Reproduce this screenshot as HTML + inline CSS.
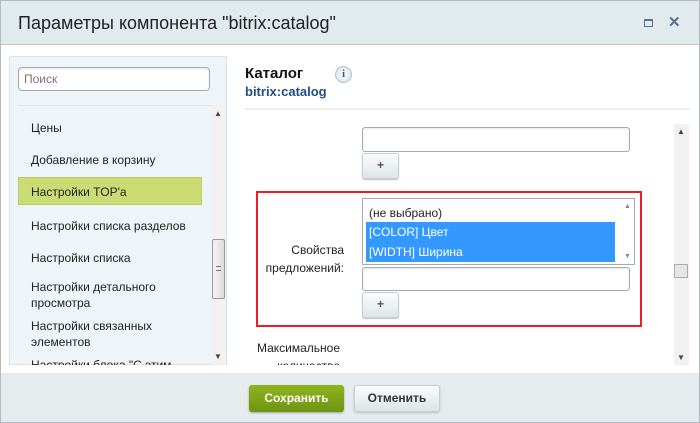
<!DOCTYPE html>
<html><head><meta charset="utf-8"><style>
*{box-sizing:border-box;margin:0;padding:0}
body{width:700px;height:423px;overflow:hidden;background:#fff;font-family:"Liberation Sans",Arial,sans-serif;position:relative;font-size:12px;color:#222}
.a{position:absolute}
.inp{position:absolute;background:#fff;border:1px solid #a5acb0;border-radius:3px;box-shadow:inset 0 1px 2px rgba(0,0,0,.1)}
.plus{position:absolute;width:37px;height:26px;border-radius:3px;background:linear-gradient(#fbfcfc,#dfe6e8);border:1px solid #c7cfd2;box-shadow:0 1px 1px rgba(0,0,0,.25);text-align:center;line-height:22px;font-size:12px;font-weight:bold;color:#555}
.li{position:absolute;left:31px;font-size:12px;color:#222;line-height:16px}
</style></head><body>
<div class="a" style="left:0;top:0;width:700px;height:423px;border:1px solid #b5bcbf"></div>
<div class="a" style="left:1px;top:1px;width:698px;height:44px;background:#e1eaed;border-bottom:1px solid #bcc5c9"></div>
<div class="a" style="left:18px;top:13px;font-size:18px;color:#222">Параметры компонента "bitrix:catalog"</div>
<div class="a" style="left:644px;top:19px;width:9px;height:8px;border:1px solid #59718d;border-top-width:2px"></div>
<div class="a" style="left:668px;top:13px;font-size:15px;color:#59718d;font-weight:bold">✕</div>

<div class="a" style="left:9px;top:56px;width:218px;height:309px;background:#eef4f7;border:1px solid #dbe3e6"></div>
<div class="inp" style="left:18px;top:67px;width:192px;height:24px;border-radius:4px"></div>
<div class="a" style="left:24px;top:72px;font-size:12px;color:#777">Поиск</div>
<div class="a" style="left:18px;top:105px;width:200px;height:1px;background:#dde5e8"></div>
<div class="a" style="left:212px;top:105px;width:13px;height:260px;background:#f1f1f1"></div>
<div class="a" style="left:214px;top:109px;font-size:8px;color:#444">▲</div>
<div class="a" style="left:214px;top:352px;font-size:8px;color:#444">▼</div>
<div class="a" style="left:212px;top:239px;width:13px;height:60px;background:linear-gradient(90deg,#f3f3f3,#dcdcdc);border:1px solid #999;border-radius:2px"></div>
<div class="a" style="left:216px;top:266px;width:5px;height:5px;border-top:1px solid #777;border-bottom:1px solid #777"></div>
<div class="li" style="top:120px">Цены</div>
<div class="li" style="top:152px">Добавление в корзину</div>
<div class="a" style="left:18px;top:177px;width:184px;height:28px;background:#cbdc74;border:1px solid #bccd68"></div>
<div class="li" style="top:184px">Настройки TOP'а</div>
<div class="li" style="top:218px">Настройки списка разделов</div>
<div class="li" style="top:250px">Настройки списка</div>
<div class="li" style="top:279px">Настройки детального<br>просмотра</div>
<div class="li" style="top:318px">Настройки связанных<br>элементов</div>
<div class="li" style="top:357px;height:8px;overflow:hidden">Настройки блока "С этим</div>

<div class="a" style="left:245px;top:65px;font-size:15px;font-weight:bold;color:#111">Каталог</div>
<div class="a" style="left:335px;top:66px;width:17px;height:17px;border-radius:50%;background:radial-gradient(#fff,#d5dde2);border:1px solid #b8c3c9;text-align:center;font:bold 11px 'Liberation Serif',serif;line-height:15px;color:#2b5f94">i</div>
<div class="a" style="left:245px;top:84px;font-size:13px;font-weight:bold;color:#1f4f82">bitrix:catalog</div>
<div class="a" style="left:245px;top:108px;width:445px;height:2px;background:#eceeef"></div>

<div class="a" style="left:674px;top:124px;width:15px;height:241px;background:#f1f1f1"></div>
<div class="a" style="left:677px;top:127px;font-size:8px;color:#444">▲</div>
<div class="a" style="left:677px;top:353px;font-size:8px;color:#444">▼</div>
<div class="a" style="left:674px;top:264px;width:14px;height:14px;background:#e6e6e6;border:1px solid #aaa"></div>

<div class="inp" style="left:362px;top:127px;width:268px;height:25px"></div>
<div class="plus" style="left:362px;top:153px">+</div>
<div class="a" style="left:256px;top:191px;width:386px;height:136px;border:2px solid #ee1c24"></div>
<div class="a" style="left:362px;top:198px;width:273px;height:67px;border:1px solid #a5acb0;background:#fff"></div>
<div class="a" style="left:369px;top:206px;font-size:12px">(не выбрано)</div>
<div class="a" style="left:366px;top:222px;width:249px;height:40px;background:#3399ff"></div>
<div class="a" style="left:369px;top:225px;font-size:12px;color:#fff">[COLOR] Цвет</div>
<div class="a" style="left:369px;top:245px;font-size:12px;color:#fff">[WIDTH] Ширина</div>
<div class="a" style="left:624px;top:203px;font-size:7px;color:#888">▲</div>
<div class="a" style="left:624px;top:253px;font-size:7px;color:#888">▼</div>
<div class="a" style="left:250px;top:241px;width:94px;text-align:right;font-size:12px;line-height:18px">Свойства<br>предложений:</div>
<div class="inp" style="left:362px;top:267px;width:268px;height:24px"></div>
<div class="plus" style="left:362px;top:292px">+</div>
<div class="a" style="left:250px;top:339px;width:90px;text-align:right;font-size:12px;line-height:18px;height:26px;overflow:hidden">Максимальное<br>количество</div>

<div class="a" style="left:1px;top:373px;width:698px;height:49px;background:#e6ecee"></div>
<div class="a" style="left:249px;top:385px;width:95px;height:27px;border-radius:3px;background:linear-gradient(#8fb41f,#6d9411);box-shadow:0 1px 2px rgba(0,0,0,.3);color:#fff;font-weight:bold;text-align:center;line-height:27px;font-size:12px">Сохранить</div>
<div class="a" style="left:354px;top:385px;width:86px;height:27px;border-radius:3px;background:linear-gradient(#fbfcfc,#dde4e6);border:1px solid #c5cdd0;box-shadow:0 1px 2px rgba(0,0,0,.2);color:#333;font-weight:bold;text-align:center;line-height:25px;font-size:12px">Отменить</div>
</body></html>
